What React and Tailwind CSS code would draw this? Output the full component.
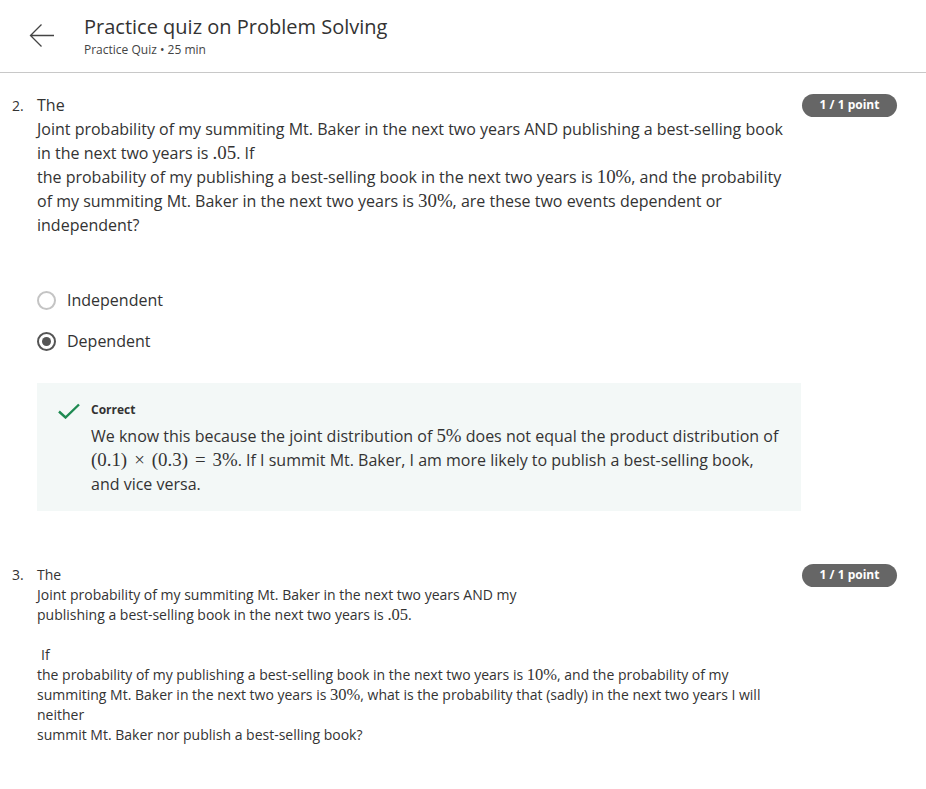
import React from 'react';

const sans = { fontFamily: '"Open Sans", "Liberation Sans", sans-serif' };
const M = ({ children }) => (
  <span className="text-[1.18em] leading-none" style={{ fontFamily: '"Liberation Serif", "DejaVu Serif", serif' }}>{children}</span>
);
const Op = ({ children }) => <span className="mx-[7px]">{children}</span>;

const Badge = () => (
  <span className="inline-flex h-[23px] w-[95px] items-center justify-center rounded-full bg-[#666666] text-[12px] font-bold text-white">
    1 / 1 point
  </span>
);

const Radio = ({ checked, label }) => (
  <label className="flex items-center gap-[11px] text-[16px] text-[#333]">
    <span className={`flex h-[19px] w-[19px] items-center justify-center rounded-full border-2 ${checked ? 'border-[#555]' : 'border-[#c4c4c4]'}`}>
      {checked && <span className="h-[9px] w-[9px] rounded-full bg-[#555]" />}
    </span>
    {label}
  </label>
);

export default function App() {
  return (
    <div className="min-h-[789px] bg-white text-[#333]" style={sans}>
      <header className="flex h-[73px] items-start border-b border-[#c8c8c8] pl-[29px] pt-[14px]">
        <svg width="26" height="26" viewBox="0 0 26 26" className="mt-[9px]" fill="none" stroke="#444" strokeWidth="1.3">
          <path d="M25 12.5H2M12.5 1.5 1.5 12.5 12.5 23.5" />
        </svg>
        <div className="ml-[29px]">
          <h1 className="text-[20px] leading-[26px] text-[#333]">Practice quiz on Problem Solving</h1>
          <p className="mt-[2px] text-[12px] leading-[16px] text-[#444]">Practice Quiz • 25 min</p>
        </div>
      </header>

      <section className="flex pl-[12px] pr-[29px] pt-[20px]">
        <span className="w-[25px] pt-[1px] text-[14px] leading-[24px]">2.</span>
        <div className="flex-1">
          <div className="flex justify-between">
            <div className="w-[752px] text-[16px] leading-[24px]">
              The
              <br />
              Joint probability of my summiting Mt. Baker in the next two years AND publishing a best-selling book in the next two years is <M>.05</M>. If
              <br />
              the probability of my publishing a best-selling book in the next two years is <M>10%</M>, and the probability of my summiting Mt. Baker in the next two years is <M>30%</M>, are these two events dependent or independent?
            </div>
            <div className="-mt-[2px]"><Badge /></div>
          </div>
          <div className="mt-[51px] flex flex-col gap-[17px]">
            <Radio label="Independent" />
            <Radio checked label="Dependent" />
          </div>
          <div className="mt-[30px] flex w-[764px] gap-[11px] bg-[#f3f8f7] pb-[15px] pl-[21px] pr-[18px] pt-[18px]">
            <svg width="22" height="16" viewBox="0 0 22 16" fill="none" stroke="#1e8a52" strokeWidth="2.4" className="mt-[2px] shrink-0">
              <path d="M1 8.5 7.5 14.5 21 1.5" />
            </svg>
            <div>
              <p className="text-[12px] font-bold leading-[18px]">Correct</p>
              <p className="mt-[5px] text-[16px] leading-[24px]">
                We know this because the joint distribution of <M>5%</M> does not equal the product distribution of <M>(0.1)<Op>×</Op>(0.3)<Op>=</Op>3%</M>. If I summit Mt. Baker, I am more likely to publish a best-selling book, and vice versa.
              </p>
            </div>
          </div>
        </div>
      </section>

      <section className="flex pl-[12px] pr-[29px] pt-[54px]">
        <span className="w-[25px] text-[14px] leading-[20px]">3.</span>
        <div className="flex-1">
          <div className="flex justify-between">
            <div className="text-[14px] leading-[20px]">
              The
              <br />
              Joint probability of my summiting Mt. Baker in the next two years AND my
              <br />
              publishing a best-selling book in the next two years is <M>.05</M>.
            </div>
            <div className="-mt-[4px]"><Badge /></div>
          </div>
          <div className="mt-[20px] w-[735px] text-[14px] leading-[20px]">
            <span className="pl-[4px]">If</span>
            <br />
            the probability of my publishing a best-selling book in the next two years is <M>10%</M>, and the probability of my summiting Mt. Baker in the next two years is <M>30%</M>, what is the probability that (sadly) in the next two years I will neither
            <br />
            summit Mt. Baker nor publish a best-selling book?
          </div>
        </div>
      </section>
    </div>
  );
}
